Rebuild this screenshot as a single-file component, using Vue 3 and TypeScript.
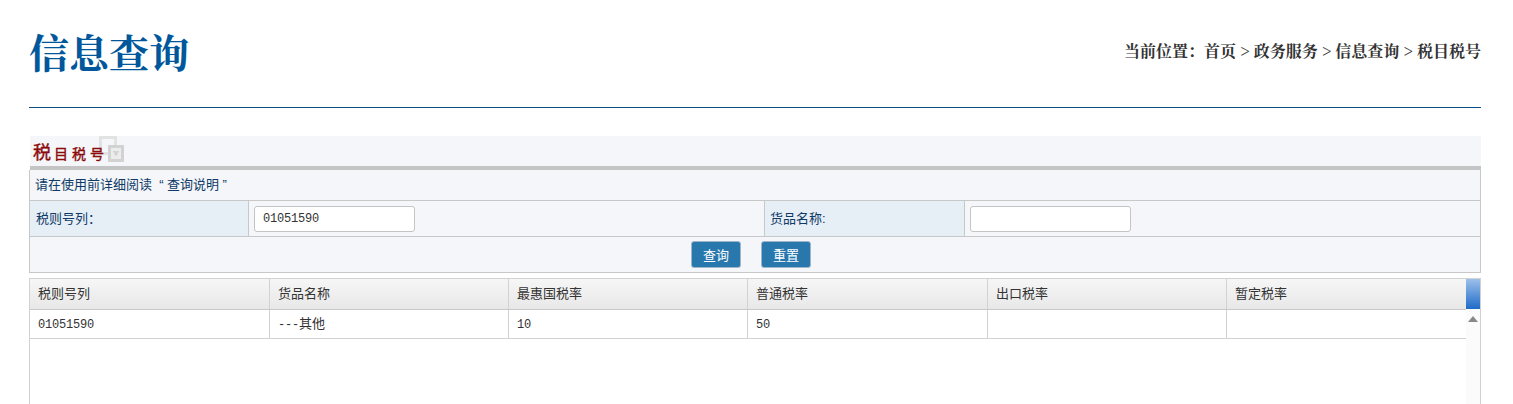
<script setup lang="ts">
const columns = ['税则号列', '货品名称', '最惠国税率', '普通税率', '出口税率', '暂定税率']
const rows = [['01051590', '---其他', '10', '50', '', '']]

// ascii runs are set in the mono face, the rest stays in the CJK face
const runs = (text: string) => text.split(/([\x20-\x7e]+)/).filter(Boolean)
const isAscii = (text: string) => /^[\x20-\x7e]+$/.test(text)
</script>

<template>
  <div class="page">
    <header class="head">
      <h1>信息查询</h1>
      <div class="crumb">当前位置：首页 &gt; 政务服务 &gt; 信息查询 &gt; 税目税号</div>
    </header>

    <section class="panel">
      <div class="panel-title">
        <svg class="deco" width="26" height="26" viewBox="0 0 26 26">
          <path d="M1.5 1.5h15v16h-15z" fill="none" stroke="#e2e2e2" stroke-width="3" />
          <path d="M10.5 10.5h13v14h-13z" fill="#ececec" stroke="#d2d2d2" stroke-width="3" />
          <path d="M14 15h6v1.500h-1.500v3h-3v-3h-1.500z" fill="#d2d2d2" />
        </svg>
        <span class="big">税</span><span class="rest">目税号</span>
      </div>
      <div class="form">
        <div class="note">请在使用前详细阅读 <span class="q">“</span>查询说明<span class="q">”</span></div>
        <div class="fields">
          <label class="key">税则号列：</label>
          <div class="val"><input value="01051590" /></div>
          <label class="key">货品名称:</label>
          <div class="val"><input /></div>
        </div>
        <div class="actions">
          <button>查询</button>
          <button>重置</button>
        </div>
      </div>
    </section>

    <section class="grid">
      <div class="grid-main">
        <div class="row head-row">
          <div v-for="c in columns" :key="c" class="cell">{{ c }}</div>
        </div>
        <div v-for="(r, i) in rows" :key="i" class="row body-row">
          <div v-for="(v, j) in r" :key="j" class="cell">
            <span v-for="(part, k) in runs(v)" :key="k" :class="{ mono: isAscii(part) }">{{ part }}</span>
          </div>
        </div>
      </div>
      <div class="scroll">
        <div class="scroll-top"></div>
        <div class="arrow"></div>
      </div>
    </section>
  </div>
</template>

<style>
html,
body {
  margin: 0;
  background: #fff;
  overflow: hidden;
}
</style>

<style scoped>
.page {
  width: 1452px;
  height: 404px;
  overflow: hidden;
  margin-left: 29px;
  font-family: "Liberation Sans", "Noto Sans CJK SC", sans-serif;
}
.head {
  height: 107px;
  border-bottom: 1px solid #0f4c81;
  display: flex;
  justify-content: space-between;
}
.head h1 {
  margin: 26px 0 0;
  font-family: "Noto Serif CJK SC", "Liberation Serif", "Noto Sans CJK SC", serif;
  font-size: 40px;
  line-height: 50px;
  font-weight: 700;
  color: #01579b;
}
.crumb {
  margin-top: 41px;
  font-family: "Noto Serif CJK SC", "Liberation Serif", "Noto Sans CJK SC", serif;
  font-size: 16px;
  line-height: 20px;
  font-weight: 700;
  color: #333;
}
.panel {
  margin-top: 28px;
}
.panel-title {
  height: 30px;
  margin-left: 1px;
  background: #f4f6f9;
  border-bottom: 4px solid #c4c4c4;
  display: flex;
  align-items: flex-end;
  padding-left: 3px;
  position: relative;
  color: #8b0a0a;
  -webkit-text-stroke: 0.4px #8b0a0a;
}
.big {
  position: relative;
  font-size: 18px;
  line-height: 26px;
}
.rest {
  position: relative;
  margin-left: 3px;
  font-size: 14px;
  line-height: 24px;
  letter-spacing: 4px;
}
.deco {
  position: absolute;
  left: 69px;
  top: 0;
}
.form {
  border: 1px solid #c8c8c8;
  border-top: 0;
  background: #f4f6f9;
  font-size: 13px;
  color: #0f3a66;
}
.note {
  height: 30px;
  line-height: 30px;
  padding-left: 5px;
  border-bottom: 1px solid #c8c8c8;
}
.q {
  padding: 0 3.5px;
}
.fields {
  display: grid;
  grid-template-columns: 219px 515px 201px 1fr;
  height: 35px;
  border-bottom: 1px solid #c8c8c8;
}
.key {
  background: #e6eef6;
  padding-left: 6px;
  line-height: 35px;
  border-right: 1px solid #c8c8c8;
}
.key:nth-child(3) {
  border-left: 1px solid #c8c8c8;
  padding-left: 5px;
}
.val {
  display: flex;
  align-items: center;
  padding-left: 5px;
}
.val input {
  width: 161px;
  height: 26px;
  box-sizing: border-box;
  border: 1px solid #c4c4c4;
  border-radius: 3px;
  background: #fff;
  padding: 0 8px;
  font: 12px "Liberation Mono", monospace;
  letter-spacing: -0.2px;
  color: #333;
  outline: none;
}
.actions {
  height: 35px;
  display: flex;
  justify-content: center;
  align-items: center;
  gap: 20px;
  padding-right: 8px;
}
.actions button {
  width: 50px;
  height: 27px;
  padding: 0;
  border: 1px solid #9fb6c9;
  border-radius: 3px;
  background: #2878ae;
  color: #fff;
  font: 13px "Liberation Sans", "Noto Sans CJK SC", sans-serif;
}
.grid {
  margin-top: 5px;
  height: 140px;
  border: 1px solid #d2d2d2;
  border-bottom: 0;
  display: flex;
  box-sizing: border-box;
  background: #fff;
}
.grid-main {
  width: 1436px;
}
.row {
  display: grid;
  grid-template-columns: 240px 239px 239px 240px 239px 239px;
}
.cell {
  padding-left: 8px;
  font-size: 13px;
  color: #333;
  border-right: 1px solid #d2d2d2;
  box-sizing: border-box;
}
.cell:last-child {
  border-right: 0;
}
.mono {
  font-family: "Liberation Mono", monospace;
  font-size: 12px;
  letter-spacing: -0.2px;
}
.head-row {
  height: 31px;
  background: linear-gradient(#f6f6f6, #e9e8e8);
  border-bottom: 1px solid #c8c8c8;
  box-sizing: border-box;
}
.head-row .cell {
  line-height: 30px;
}
.body-row {
  height: 29px;
  border-bottom: 1px solid #d2d2d2;
  box-sizing: border-box;
}
.body-row .cell {
  line-height: 28px;
}
.scroll {
  flex: 1;
  background: #fbfbfb;
}
.scroll-top {
  height: 30px;
  background: linear-gradient(#9dc0ea, #1f6cc8);
}
.arrow {
  width: 0;
  height: 0;
  margin: 7px auto 0;
  border: 5px solid transparent;
  border-top: 0;
  border-bottom: 6px solid #888;
}
</style>
